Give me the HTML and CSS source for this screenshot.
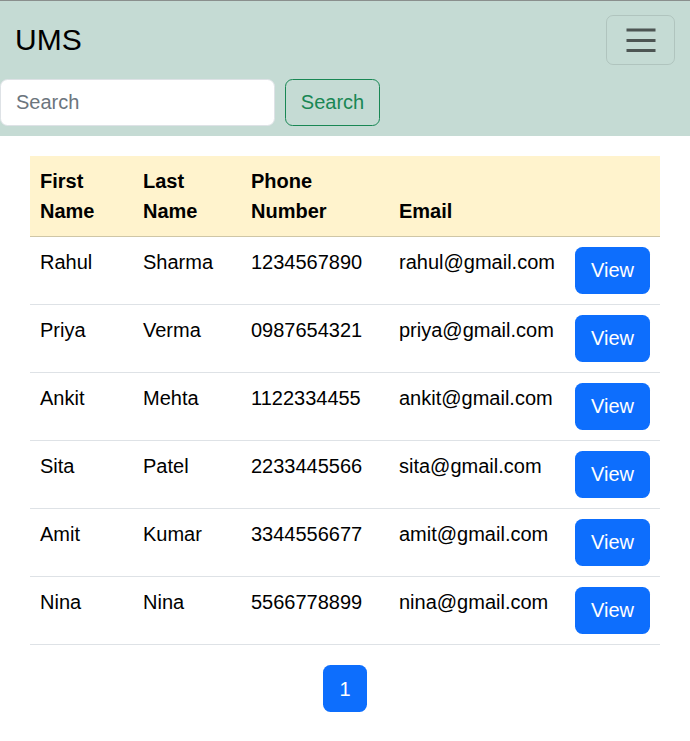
FILE: index.html
```html
<!DOCTYPE html>
<html lang="en">
<head>
<meta charset="utf-8">
<title>UMS</title>
<link rel="stylesheet" href="styles.css">
</head>
<body>
<nav class="navbar">
  <div class="nav-top">
    <span class="brand">UMS</span>
    <button class="toggler" type="button" aria-label="Toggle navigation">
      <svg class="toggler-icon" width="30" height="24" viewBox="0 0 30 24"><path d="M0.5 2h29M0.5 12.5h29M0.5 22.5h29" stroke="#4d5553" stroke-width="3" stroke-linecap="butt"/></svg>
    </button>
  </div>
  <form class="search-form">
    <input class="search-input" type="search" placeholder="Search">
    <button class="btn-search" type="button">Search</button>
  </form>
</nav>
<main class="content">
  <table class="table">
    <colgroup>
      <col class="c1"><col class="c2"><col class="c3"><col class="c4"><col class="c5">
    </colgroup>
    <thead>
      <tr><th>First Name</th><th>Last Name</th><th>Phone Number</th><th>Email</th><th></th></tr>
    </thead>
    <tbody>
      <tr><td>Rahul</td><td>Sharma</td><td>1234567890</td><td>rahul@gmail.com</td><td><button class="btn-view">View</button></td></tr>
      <tr><td>Priya</td><td>Verma</td><td>0987654321</td><td>priya@gmail.com</td><td><button class="btn-view">View</button></td></tr>
      <tr><td>Ankit</td><td>Mehta</td><td>1122334455</td><td>ankit@gmail.com</td><td><button class="btn-view">View</button></td></tr>
      <tr><td>Sita</td><td>Patel</td><td>2233445566</td><td>sita@gmail.com</td><td><button class="btn-view">View</button></td></tr>
      <tr><td>Amit</td><td>Kumar</td><td>3344556677</td><td>amit@gmail.com</td><td><button class="btn-view">View</button></td></tr>
      <tr><td>Nina</td><td>Nina</td><td>5566778899</td><td>nina@gmail.com</td><td><button class="btn-view">View</button></td></tr>
    </tbody>
  </table>
  <div class="pagination">
    <span class="page-item">1</span>
  </div>
</main>
</body>
</html>
```
FILE: styles.css
```css
* { box-sizing: border-box; }
body {
  margin: 0;
  font-family: "Liberation Sans", Arial, sans-serif;
  font-size: 20px;
  line-height: 30px;
  color: #212529;
  background: #fff;
}
.navbar {
  background: #c5dbd4;
  border-top: 1px solid #8a8f8d;
  padding: 10px 0;
}
.nav-top {
  display: flex;
  align-items: center;
  justify-content: space-between;
  height: 58px;
  padding: 0 15px;
}
.brand {
  font-size: 30px;
  line-height: 36px;
  color: #000;
}
.toggler {
  width: 69px;
  height: 50px;
  border: 1px solid rgba(0,0,0,0.1);
  border-radius: 7px;
  background: transparent;
  display: flex;
  align-items: center;
  justify-content: center;
  padding: 0;
}
.toggler-icon { display: block; }
.search-form {
  display: flex;
  gap: 10px;
  margin-top: 10px;
}
.search-input {
  width: 275px;
  height: 47px;
  border: 1px solid #dee2e6;
  border-radius: 7.5px;
  padding: 7px 15px;
  font-family: inherit;
  font-size: 20px;
  color: #212529;
  background: #fff;
  outline: none;
}
.search-input::placeholder { color: #6c757d; }
.btn-search {
  height: 47px;
  width: 95px;
  border: 1px solid #198754;
  border-radius: 7.5px;
  background: transparent;
  color: #198754;
  font-family: inherit;
  font-size: 20px;
  padding: 0;
}
.content {
  padding: 20px 30px 0;
}
.table {
  width: 100%;
  table-layout: fixed;
  border-collapse: collapse;
  vertical-align: top;
}
.c1 { width: 103px; }
.c2 { width: 108px; }
.c3 { width: 148px; }
.c4 { width: 176px; }
.c5 { width: 95px; }
.table th, .table td {
  padding: 10px;
  text-align: left;
  border-bottom: 1px solid #dee2e6;
  color: #000;
}
.table thead th {
  background: #fff3cd;
  font-weight: bold;
  vertical-align: bottom;
  border-bottom: 1px solid #cfc6a6;
}
.table td { vertical-align: top; }
.btn-view {
  width: 75px;
  height: 47px;
  border: 0;
  border-radius: 7.5px;
  background: #0d6efd;
  color: #fff;
  font-family: inherit;
  font-size: 20px;
  padding: 0;
  display: block;
}
.pagination {
  display: flex;
  justify-content: center;
  margin-top: 20px;
}
.page-item {
  width: 44px;
  height: 47px;
  border-radius: 7.5px;
  background: #0d6efd;
  color: #fff;
  display: flex;
  align-items: center;
  justify-content: center;
}
```
